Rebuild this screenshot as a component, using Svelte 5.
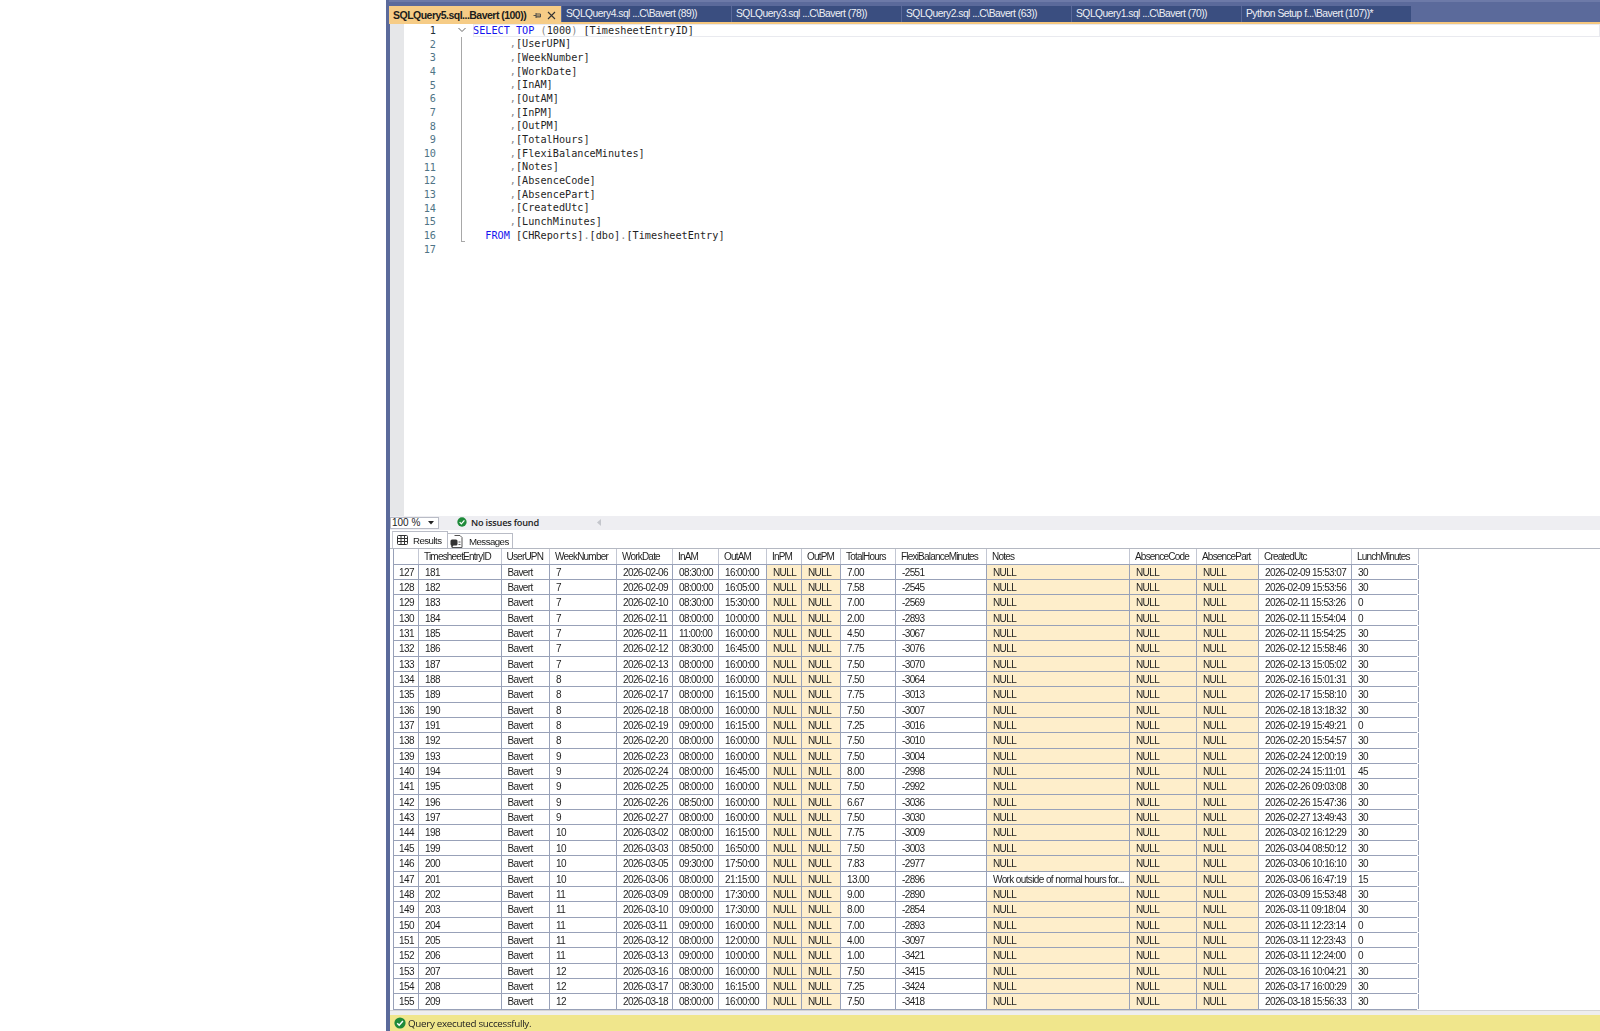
<script lang="ts">
	const tabs = [
		'SQLQuery4.sql ...C\\Bavert (89))',
		'SQLQuery3.sql ...C\\Bavert (78))',
		'SQLQuery2.sql ...C\\Bavert (63))',
		'SQLQuery1.sql ...C\\Bavert (70))',
		'Python Setup f...\\Bavert (107))*'
	];

	const fields = [
		'UserUPN', 'WeekNumber', 'WorkDate', 'InAM', 'OutAM', 'InPM', 'OutPM', 'TotalHours',
		'FlexiBalanceMinutes', 'Notes', 'AbsenceCode', 'AbsencePart', 'CreatedUtc', 'LunchMinutes'
	];

	const columns = [
		'TimesheetEntryID', 'UserUPN', 'WeekNumber', 'WorkDate', 'InAM', 'OutAM', 'InPM', 'OutPM', 'TotalHours',
		'FlexiBalanceMinutes', 'Notes', 'AbsenceCode', 'AbsencePart', 'CreatedUtc', 'LunchMinutes'
	];

	// week | date | in | out | hours | flexi | created | lunch
	const raw = [
		'7|02-06|08:30|16:00|7.00|-2551|02-09 15:53:07|30',
		'7|02-09|08:00|16:05|7.58|-2545|02-09 15:53:56|30',
		'7|02-10|08:30|15:30|7.00|-2569|02-11 15:53:26|0',
		'7|02-11|08:00|10:00|2.00|-2893|02-11 15:54:04|0',
		'7|02-11|11:00|16:00|4.50|-3067|02-11 15:54:25|30',
		'7|02-12|08:30|16:45|7.75|-3076|02-12 15:58:46|30',
		'7|02-13|08:00|16:00|7.50|-3070|02-13 15:05:02|30',
		'8|02-16|08:00|16:00|7.50|-3064|02-16 15:01:31|30',
		'8|02-17|08:00|16:15|7.75|-3013|02-17 15:58:10|30',
		'8|02-18|08:00|16:00|7.50|-3007|02-18 13:18:32|30',
		'8|02-19|09:00|16:15|7.25|-3016|02-19 15:49:21|0',
		'8|02-20|08:00|16:00|7.50|-3010|02-20 15:54:57|30',
		'9|02-23|08:00|16:00|7.50|-3004|02-24 12:00:19|30',
		'9|02-24|08:00|16:45|8.00|-2998|02-24 15:11:01|45',
		'9|02-25|08:00|16:00|7.50|-2992|02-26 09:03:08|30',
		'9|02-26|08:50|16:00|6.67|-3036|02-26 15:47:36|30',
		'9|02-27|08:00|16:00|7.50|-3030|02-27 13:49:43|30',
		'10|03-02|08:00|16:15|7.75|-3009|03-02 16:12:29|30',
		'10|03-03|08:50|16:50|7.50|-3003|03-04 08:50:12|30',
		'10|03-05|09:30|17:50|7.83|-2977|03-06 10:16:10|30',
		'10|03-06|08:00|21:15|13.00|-2896|03-06 16:47:19|15',
		'11|03-09|08:00|17:30|9.00|-2890|03-09 15:53:48|30',
		'11|03-10|09:00|17:30|8.00|-2854|03-11 09:18:04|30',
		'11|03-11|09:00|16:00|7.00|-2893|03-11 12:23:14|0',
		'11|03-12|08:00|12:00|4.00|-3097|03-11 12:23:43|0',
		'11|03-13|09:00|10:00|1.00|-3421|03-11 12:24:00|0',
		'12|03-16|08:00|16:00|7.50|-3415|03-16 10:04:21|30',
		'12|03-17|08:30|16:15|7.25|-3424|03-17 16:00:29|30',
		'12|03-18|08:00|16:00|7.50|-3418|03-18 15:56:33|30'
	];

	const rows = raw.map((line, i) => {
		const [week, date, inAm, outAm, hours, flexi, created, lunch] = line.split('|');
		const rowNo = 127 + i;
		return {
			rowNo,
			cells: [
				String(181 + i), 'Bavert', week, `2026-${date}`, `${inAm}:00`, `${outAm}:00`, 'NULL', 'NULL', hours, flexi,
				rowNo === 147 ? 'Work outside of normal hours for...' : 'NULL', 'NULL', 'NULL', `2026-${created}`, lunch
			]
		};
	});
</script>

{#snippet check(size)}
	<svg class="check" width={size} height={size} viewBox="0 0 12 12">
		<circle cx="6" cy="6" r="5.6" fill="#1e8a3a" />
		<path d="M3.2 6.2 5.2 8.2 8.9 4.1" fill="none" stroke="#fff" stroke-width="1.5" />
	</svg>
{/snippet}

<div class="page">
	<div class="frame">
		<div class="tabbar">
			<div class="tab active">
				<span class="tab-title">SQLQuery5.sql...Bavert (100))</span>
				<svg class="pin" width="9" height="9" viewBox="0 0 9 9">
					<path d="M0.5 4.5H3M3 2V7M3 3H7.5V6H3M3 5H7.5" fill="none" stroke="#444" stroke-width="0.9" />
				</svg>
				<svg class="close" width="9" height="9" viewBox="0 0 9 9">
					<path d="M1 1 8 8M8 1 1 8" fill="none" stroke="#333" stroke-width="1.1" />
				</svg>
			</div>
			{#each tabs as tab}
				<div class="tab">{tab}</div>
			{/each}
		</div>

		<div class="editor">
			<div class="gutter"></div>
			<div class="lines">
				<div class="line current">
					<span class="num">1</span>
					<span class="fold">
						<svg width="8" height="6" viewBox="0 0 8 6"><path d="M0.5 1 4 4.5 7.5 1" fill="none" stroke="#666" /></svg>
					</span>
					<code class="code"><span class="kw">SELECT</span> <span class="kw">TOP</span> <span class="dim">(</span>1000<span class="dim">)</span> [TimesheetEntryID]</code>
				</div>
				{#each fields as field, i}
					<div class="line">
						<span class="num">{i + 2}</span>
						<span class="fold"><i class="fold-line"></i></span>
						<code class="code">{'      '}<span class="dim">,</span>[{field}]</code>
					</div>
				{/each}
				<div class="line">
					<span class="num">16</span>
					<span class="fold"><i class="fold-line end"></i></span>
					<code class="code">{'  '}<span class="kw">FROM</span> [CHReports]<span class="dim">.</span>[dbo]<span class="dim">.</span>[TimesheetEntry]</code>
				</div>
				<div class="line">
					<span class="num">17</span>
				</div>
			</div>
		</div>

		<div class="zoombar">
			<div class="zoom-select">
				<span>100 %</span>
				<svg width="6" height="4" viewBox="0 0 6 4"><path d="M0 0H6L3 3.5Z" fill="#222" /></svg>
			</div>
			<div class="issues">
				{@render check(10)}
				<span>No issues found</span>
			</div>
			<svg class="scroll-left" width="4" height="7" viewBox="0 0 4 7"><path d="M4 0V7L0 3.5Z" fill="#c4c6cc" /></svg>
		</div>

		<div class="resulttabs">
			<div class="rtab on">
				<svg width="11" height="10" viewBox="0 0 11 10">
					<path d="M1.5 .5H9.500Q10.500 .5 10.500 1.500V8.500Q10.500 9.500 9.500 9.500H1.500Q.5 9.500 .5 8.500V1.500Q.5 .5 1.500 .5ZM.5 3.500H10.500M.5 6.500H10.500M4 .5V9.500M7.500 .5V9.500" fill="none" stroke="#333" />
				</svg>
				<span>Results</span>
			</div>
			<div class="rtab">
				<svg width="13" height="13" viewBox="0 0 13 13">
					<path d="M4.500 .5H10L12 2.500V12.500H2V6" fill="#fff" stroke="#555" />
					<path d="M.5 6Q.5 4.500 2 4.500H6Q7.500 4.500 7.500 6V9Q7.500 10.500 6 10.500H3.500L1.500 12.500V10.500Q.5 10.500 .5 9Z" fill="#333" />
					<path d="M8.500 7H10.500M8.500 9.500H10.500" stroke="#555" />
				</svg>
				<span>Messages</span>
			</div>
		</div>

		<div class="grid">
			<div class="row head">
				<div class="cell"></div>
				{#each columns as column}
					<div class="cell">{column}</div>
				{/each}
			</div>
			{#each rows as row}
				<div class="row">
					<div class="cell rowno">{row.rowNo}</div>
					{#each row.cells as cell}
						<div class="cell" class:null={cell === 'NULL'}>{cell}</div>
					{/each}
				</div>
			{/each}
		</div>

		<div class="splitter"></div>

		<div class="status">
			{@render check(12)}
			<span>Query executed successfully.</span>
		</div>
	</div>
</div>

<style>
	:global(body) {
		margin: 0;
		background: #fff;
	}

	.page {
		width: 1600px;
		height: 1031px;
		padding-left: 386px;
		box-sizing: border-box;
		overflow: hidden;
		font-family: 'Liberation Sans', Arial, sans-serif;
		color: #222;
	}

	.frame {
		height: 100%;
		border-left: 4px solid #5b6a9b;
		display: flex;
		flex-direction: column;
		filter: blur(0.35px);
	}

	.tabbar {
		height: 24px;
		box-sizing: border-box;
		flex: none;
		display: flex;
		align-items: flex-end;
		gap: 1px;
		margin-left: -1px;
		padding: 0 0 2px;
		background: #5b6a9b;
		border-top: 2px solid #6d7aa8;
		box-shadow: inset 0 -2px 0 #f5c77e;
		font-size: 10.3px;
		letter-spacing: -0.5px;
	}

	.tab {
		width: 169px;
		height: 16px;
		box-sizing: border-box;
		padding-left: 4px;
		line-height: 16px;
		background: #3a4e80;
		color: #eef0f6;
		white-space: nowrap;
	}

	.tab.active {
		width: 172px;
		height: 18px;
		margin-bottom: -2px;
		display: flex;
		align-items: center;
		padding-left: 4px;
		background: #f6cc86;
		color: #1c1c1c;
		line-height: 17px;
	}

	.tab-title {
		width: 140px;
		font-size: 10.5px;
		font-weight: bold;
		letter-spacing: -0.52px;
	}

	.close {
		margin-left: 5px;
	}

	.editor {
		height: 492px;
		flex: none;
		display: flex;
		background: #fff;
	}

	.gutter {
		width: 14px;
		flex: none;
		background: #e6e7e9;
	}

	.lines {
		flex: 1;
		min-width: 0;
		margin-top: -0.4px;
	}

	.line {
		height: 13.68px;
		display: flex;
		align-items: center;
		font-family: 'DejaVu Sans Mono', monospace;
		font-size: 10.2px;
		line-height: 13px;
	}

	.line.current .code {
		box-shadow: inset 0 0 0 1px #e9eaef;
	}

	.num {
		width: 32px;
		flex: none;
		text-align: right;
		color: #4f7486;
	}

	.current .num {
		color: #1f2f38;
	}

	.fold {
		width: 37px;
		height: 100%;
		flex: none;
		display: flex;
		align-items: center;
		padding-left: 22px;
		box-sizing: border-box;
	}

	.fold-line {
		display: block;
		width: 4px;
		height: 100%;
		margin-left: 3px;
		box-sizing: border-box;
		border-left: 1px solid #a8a8a8;
	}

	.fold-line.end {
		border-bottom: 1px solid #a8a8a8;
	}

	.code {
		flex: 1;
		height: 100%;
		font: inherit;
		line-height: 13.68px;
		white-space: pre;
		color: #1f1f1f;
	}

	.kw {
		color: #1414ee;
	}

	.dim {
		color: #8a8a8a;
	}

	.zoombar {
		height: 14px;
		flex: none;
		display: flex;
		align-items: center;
		background: #eeeef2;
	}

	.zoom-select {
		width: 49px;
		height: 12px;
		box-sizing: border-box;
		display: flex;
		align-items: center;
		justify-content: space-between;
		padding: 0 4px 0 1px;
		background: #fff;
		border: 1px solid #b9bcc6;
		font-size: 10px;
		line-height: 10px;
	}

	.issues {
		display: flex;
		align-items: center;
		gap: 4px;
		width: 80px;
		margin-left: 18px;
		margin-bottom: 2px;
		white-space: nowrap;
		font-family: 'Open Sans', sans-serif;
		font-size: 9.2px;
		font-weight: 600;
		letter-spacing: -0.2px;
	}

	.scroll-left {
		margin-left: 60px;
		margin-bottom: 2px;
	}

	.resulttabs {
		height: 18px;
		flex: none;
		display: flex;
		align-items: flex-end;
		padding-left: 2px;
		box-sizing: border-box;
		font-size: 9.7px;
		letter-spacing: -0.55px;
	}

	.rtab {
		width: 65px;
		height: 15px;
		box-sizing: border-box;
		display: flex;
		align-items: center;
		gap: 6px;
		padding-left: 2px;
		border: 1px solid #b9bcc6;
		border-bottom: 0;
		border-left: 0;
		background: #fff;
	}

	.rtab.on {
		width: 56px;
		height: 17px;
		gap: 5px;
		padding-left: 4px;
		border-left: 1px solid #c9cbd2;
	}

	.grid {
		height: 462px;
		flex: none;
		border-top: 1px solid #b4b8c2;
		padding-left: 3px;
		box-sizing: border-box;
		background: #fff;
	}

	.row {
		--cols: 25px 82.5px 48.5px 67px 56px 46px 48px 35px 39px 55px 91px 143px 67px 62px 93px 67px;
		height: 15.35px;
		width: 1024px;
		box-sizing: border-box;
		display: grid;
		grid-template-columns: var(--cols);
		font-size: 10px;
		letter-spacing: -0.62px;
		border-bottom: 1px solid #98a1b8;
		border-left: 1px solid #98a1b8;
		color: #1f1f1f;
	}

	.row.head {
		height: 15.65px;
		letter-spacing: -0.8px;
	}

	.cell {
		min-width: 0;
		padding-left: 6px;
		overflow: hidden;
		white-space: nowrap;
		border-right: 1px solid #98a1b8;
		line-height: 16px;
	}

	.head .cell {
		padding-left: 5px;
		border-right: 1px solid #c3c7d3;
	}

	.cell.rowno {
		padding-left: 5px;
	}

	.cell.null {
		background: #feeecb;
	}

	.splitter {
		height: 5px;
		flex: none;
		background: #eeeeee;
		border-top: 1px solid #d4d4d4;
		box-sizing: border-box;
	}

	.status {
		flex: 1;
		display: flex;
		align-items: center;
		gap: 2px;
		padding-left: 4px;
		background: #f0e68c;
		font-family: 'Open Sans', sans-serif;
		font-size: 9.8px;
		letter-spacing: -0.3px;
	}

	.check {
		flex: none;
	}
</style>
